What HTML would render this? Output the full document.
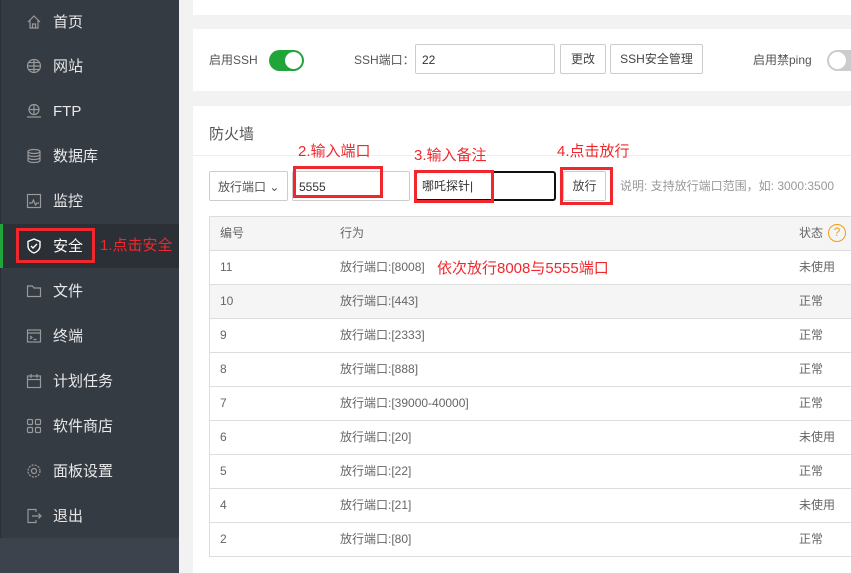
<!DOCTYPE html>
<html><head><meta charset="utf-8"><style>
*{margin:0;padding:0;box-sizing:border-box}
body{width:851px;height:573px;overflow:hidden;background:#f2f2f2;font-family:"Liberation Sans","Noto Sans CJK SC",sans-serif;position:relative;color:#555}
.a{position:absolute}
#side{left:0;top:0;width:179px;height:573px;background:#3c434c}
#side .dk{left:0;top:0;width:179px;height:538px;background:#343b43;border-left:1px solid #2b3036}
.it{left:0;width:179px;height:45px;color:#e8e8e8;font-size:15px;line-height:45px}
.it span{position:absolute;left:53px}
.it svg{position:absolute;left:26px;top:14px}
.card{background:#fff;left:193px;right:0}
.txt{font-size:12px;color:#555;white-space:nowrap;line-height:16px}
.inp{border:1px solid #ccc;background:#fff;border-radius:2px}
.btn{border:1px solid #ccc;background:#fff;border-radius:2px;font-size:12px;color:#444;text-align:center}
.red{color:#f0282d;font-size:15px;white-space:nowrap;line-height:18px}
.rb{border:3px solid #f0282d}
.row{left:209px;width:642px;height:34px;border-bottom:1px solid #ddd;border-left:1px solid #ddd;font-size:12px;color:#666}
.row span{position:absolute;top:0;line-height:33px;white-space:nowrap}
</style></head><body>
<div id="side" class="a"><div class="dk a"></div>
<div class="a" style="left:0;top:224px;width:179px;height:44px;background:#2b3036;border-left:3px solid #20a53a"></div>
<div class="a it" style="top:0"><svg width="16" height="16" viewBox="0 0 16 16" fill="none" stroke="#999" stroke-width="1.2"><path d="M2 8L8 2l6 6M4 6.5V14h8V6.5M6.5 14v-4h3v4"/></svg><span>首页</span></div>
<div class="a it" style="top:44px"><svg width="16" height="16" viewBox="0 0 16 16" fill="none" stroke="#999" stroke-width="1.2"><circle cx="8" cy="8" r="6.5"/><path d="M1.5 8h13M8 1.5v13M3 4.5h10M3 11.5h10"/></svg><span>网站</span></div>
<div class="a it" style="top:89px"><svg width="16" height="16" viewBox="0 0 16 16" fill="none" stroke="#999" stroke-width="1.2"><circle cx="8" cy="6.5" r="5"/><path d="M3 6.5h10M8 1.5v10M1 14h14"/></svg><span>FTP</span></div>
<div class="a it" style="top:134px"><svg width="16" height="16" viewBox="0 0 16 16" fill="none" stroke="#999" stroke-width="1.2"><ellipse cx="8" cy="3.5" rx="6" ry="2"/><path d="M2 3.5v9c0 1.1 2.7 2 6 2s6-.9 6-2v-9M2 6.5c0 1.1 2.7 2 6 2s6-.9 6-2M2 9.5c0 1.1 2.7 2 6 2s6-.9 6-2"/></svg><span>数据库</span></div>
<div class="a it" style="top:179px"><svg width="16" height="16" viewBox="0 0 16 16" fill="none" stroke="#999" stroke-width="1.2"><rect x="1.5" y="1.5" width="13" height="13"/><path d="M3 10h3l1.5-3 2 5 1.5-2h2"/></svg><span>监控</span></div>
<div class="a it" style="top:224px;color:#fff"><svg width="16" height="16" viewBox="0 0 16 16" fill="none" stroke="#fff" stroke-width="1.4"><path d="M8 1l6 2.5v4.5c0 3.5-3 6-6 7-3-1-6-3.5-6-7V3.5z"/><path d="M5 8l2 2 4-4"/></svg><span>安全</span></div>
<div class="a it" style="top:269px"><svg width="16" height="16" viewBox="0 0 16 16" fill="none" stroke="#999" stroke-width="1.2"><path d="M1.5 3h5l1.5 2h6.5v8.5h-13z"/></svg><span>文件</span></div>
<div class="a it" style="top:314px"><svg width="16" height="16" viewBox="0 0 16 16" fill="none" stroke="#999" stroke-width="1.2"><rect x="1.5" y="2" width="13" height="12"/><path d="M1.5 5h13M4 8l2 1.5L4 11M7.5 11.5h3"/></svg><span>终端</span></div>
<div class="a it" style="top:359px"><svg width="16" height="16" viewBox="0 0 16 16" fill="none" stroke="#999" stroke-width="1.2"><rect x="1.5" y="3" width="13" height="11.5"/><path d="M1.5 6.5h13M5 1v4M11 1v4"/></svg><span>计划任务</span></div>
<div class="a it" style="top:404px"><svg width="16" height="16" viewBox="0 0 16 16" fill="none" stroke="#999" stroke-width="1.2"><rect x="1.5" y="1.5" width="5" height="5" rx="1"/><rect x="9.5" y="1.5" width="5" height="5" rx="1"/><rect x="1.5" y="9.5" width="5" height="5" rx="1"/><rect x="9.5" y="9.5" width="5" height="5" rx="1"/></svg><span>软件商店</span></div>
<div class="a it" style="top:449px"><svg width="16" height="16" viewBox="0 0 16 16" fill="none" stroke="#999" stroke-width="1.2"><circle cx="8" cy="8" r="2.5"/><circle cx="8" cy="8" r="6" stroke-dasharray="2 1.2"/></svg><span>面板设置</span></div>
<div class="a it" style="top:494px"><svg width="16" height="16" viewBox="0 0 16 16" fill="none" stroke="#999" stroke-width="1.2"><path d="M10 4V1.5H2v13h8V12M6 8h9M12.5 5.5L15 8l-2.5 2.5"/></svg><span>退出</span></div>
</div>
<div class="a rb" style="left:16px;top:228px;width:79px;height:35px"></div>
<div class="a red" style="left:100px;top:237px">1.点击安全</div>

<div class="a card" style="top:0;height:15px"></div>
<div class="a card" style="top:29px;height:62px"></div>
<div class="a txt" style="left:209px;top:52px">启用SSH</div>
<div class="a" style="left:269px;top:50px;width:35px;height:21px;border-radius:11px;background:#20a53a"><div class="a" style="right:2px;top:2px;width:17px;height:17px;border-radius:50%;background:#fff"></div></div>
<div class="a txt" style="left:354px;top:52px">SSH端口：</div>
<div class="a inp" style="left:415px;top:44px;width:140px;height:30px"><span class="a txt" style="left:6px;top:7px;color:#333">22</span></div>
<div class="a btn" style="left:560px;top:44px;width:46px;height:30px;line-height:28px">更改</div>
<div class="a btn" style="left:610px;top:44px;width:93px;height:30px;line-height:28px">SSH安全管理</div>
<div class="a txt" style="left:753px;top:52px">启用禁ping</div>
<div class="a" style="left:827px;top:50px;width:35px;height:21px;border-radius:11px;background:#ccc"><div class="a" style="left:2px;top:2px;width:17px;height:17px;border-radius:50%;background:#fff"></div></div>

<div class="a card" style="top:106px;height:467px"></div>
<div class="a" style="left:209px;top:123px;font-size:15px;color:#555">防火墙</div>
<div class="a" style="left:193px;top:155px;width:658px;height:1px;background:#eee"></div>
<div class="a red" style="left:298px;top:143px">2.输入端口</div>
<div class="a red" style="left:414px;top:147px">3.输入备注</div>
<div class="a red" style="left:557px;top:143px">4.点击放行</div>
<div class="a inp" style="left:209px;top:171px;width:79px;height:30px"><span class="a txt" style="left:8px;top:7px">放行端口 ⌄</span></div>
<div class="a inp" style="left:292px;top:171px;width:118px;height:30px"><span class="a txt" style="left:6px;top:7px;color:#333">5555</span></div>
<div class="a rb" style="left:293px;top:166px;width:90px;height:32px"></div>
<div class="a" style="left:415px;top:171px;width:141px;height:30px;border:2px solid #111;border-radius:3px"><span class="a txt" style="left:5px;top:5px;color:#333">哪吒探针|</span></div>
<div class="a rb" style="left:414px;top:170px;width:80px;height:33px"></div>
<div class="a btn" style="left:563px;top:171px;width:43px;height:30px;line-height:28px">放行</div>
<div class="a rb" style="left:560px;top:167px;width:53px;height:38px"></div>
<div class="a txt" style="left:620px;top:178px;color:#999">说明: 支持放行端口范围，如: 3000:3500</div>

<div class="a row" style="top:216px;background:#f5f5f5;border-top:1px solid #ddd;height:35px"><span style="left:10px">编号</span><span style="left:130px">行为</span><span style="left:589px">状态</span><div class="a" style="left:618px;top:7px;width:18px;height:18px;border:1.5px solid #f39c12;border-radius:50%;color:#f39c12;font-size:12px;text-align:center;line-height:15px">?</div></div>
<div class="a row" style="top:251px;background:#fff"><span style="left:10px">11</span><span style="left:130px">放行端口:[8008]</span><span style="left:589px">未使用</span></div>
<div class="a red" style="left:437px;top:260px">依次放行8008与5555端口</div>
<div class="a row" style="top:285px;background:#f5f5f5"><span style="left:10px">10</span><span style="left:130px">放行端口:[443]</span><span style="left:589px">正常</span></div>
<div class="a row" style="top:319px;background:#fff"><span style="left:10px">9</span><span style="left:130px">放行端口:[2333]</span><span style="left:589px">正常</span></div>
<div class="a row" style="top:353px;background:#fff"><span style="left:10px">8</span><span style="left:130px">放行端口:[888]</span><span style="left:589px">正常</span></div>
<div class="a row" style="top:387px;background:#fff"><span style="left:10px">7</span><span style="left:130px">放行端口:[39000-40000]</span><span style="left:589px">正常</span></div>
<div class="a row" style="top:421px;background:#fff"><span style="left:10px">6</span><span style="left:130px">放行端口:[20]</span><span style="left:589px">未使用</span></div>
<div class="a row" style="top:455px;background:#fff"><span style="left:10px">5</span><span style="left:130px">放行端口:[22]</span><span style="left:589px">正常</span></div>
<div class="a row" style="top:489px;background:#fff"><span style="left:10px">4</span><span style="left:130px">放行端口:[21]</span><span style="left:589px">未使用</span></div>
<div class="a row" style="top:523px;background:#fff"><span style="left:10px">2</span><span style="left:130px">放行端口:[80]</span><span style="left:589px">正常</span></div>
</body></html>
